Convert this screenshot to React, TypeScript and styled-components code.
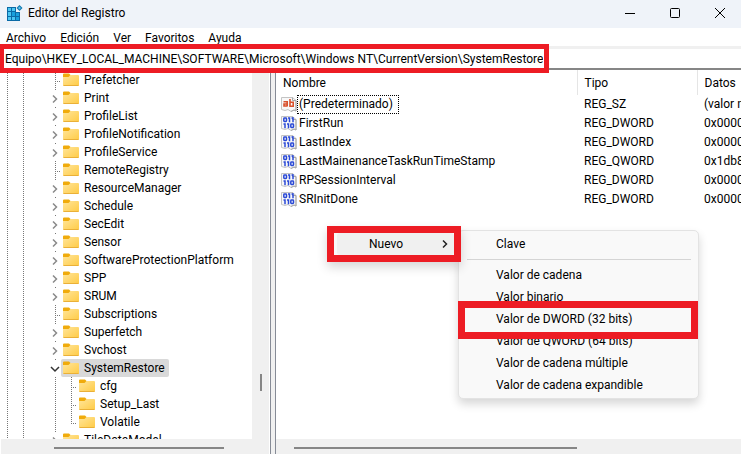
import React from "react";
import styled, { createGlobalStyle } from "styled-components";

const Global = createGlobalStyle`
  *, *::before, *::after { box-sizing: border-box; }
  body { margin: 0; background: #fff; overflow: hidden; }
  body, button, input { font-family: Roboto, "Open Sans", sans-serif; font-size: 12px; color: #000; }
  button { border: 0; padding: 0; background: none; }
`;

const MARK = "#ed1c24";
const dots = (dir: string) =>
  `repeating-linear-gradient(${dir}, #777 0 1px, transparent 1px 2px)`;

const Window = styled.div`
  position: relative;
  display: flex;
  flex-direction: column;
  height: 100vh;
  overflow: hidden;
  line-height: 18px;
`;
const TitleBar = styled.header`
  display: flex;
  align-items: center;
  gap: 3px;
  height: 28px;
  flex: none;
  padding: 0 0 2px 7px;
  background: #eff3f9;
`;
const Title = styled.h1`
  flex: 1;
  margin: 0 0 0 2px;
  font-size: 12px;
  font-weight: 400;
  line-height: 24px;
`;
const WindowButton = styled.button`
  display: grid;
  place-items: center;
  width: 42px;
  height: 22px;
`;
const MenuBar = styled.nav`
  display: flex;
  height: 18px;
  flex: none;
  padding-left: 6px;
  gap: 14px;
`;
const MenuButton = styled.button`
  line-height: 20px;
`;
const AddressBar = styled.div`
  display: flex;
  flex: none;
  height: 24px;
  border-top: 3px solid #f0f0f0;
  border-bottom: 2px solid #868686;
  padding-left: 4px;
`;
const Address = styled.input`
  position: relative;
  z-index: 2;
  width: 540px;
  height: 19px;
  border: 0;
  padding: 0 1px;
  background: #fff;
  outline: 5px solid ${MARK};
`;
const Panes = styled.main`
  display: flex;
  flex: 1;
  min-height: 0;
`;
const TreePane = styled.section`
  display: grid;
  grid-template: minmax(0, 1fr) 15px / minmax(0, 1fr) 17px;
  width: 269px;
  flex: none;
  padding-left: 1px;
`;
const Tree = styled.ul`
  margin: 0;
  padding: 1px 0 0;
  list-style: none;
  overflow: hidden;
`;
const TreeRow = styled.li`
  display: flex;
  height: 18px;
`;
const Guide = styled.span<{ $w: number }>`
  width: ${(p) => p.$w}px;
  flex: none;
  background: ${dots("180deg")} 6px 0 / 1px 100% no-repeat;
`;
const Leaf = styled.span<{ $last?: boolean }>`
  width: 12px;
  flex: none;
  background:
    ${dots("180deg")} 6px 0 / 1px ${(p) => (p.$last ? "11px" : "100%")} no-repeat,
    ${dots("90deg")} 6px 10px / 6px 1px no-repeat;
`;
const Toggle = styled.button`
  display: grid;
  place-items: center;
  width: 12px;
  height: 18px;
  padding-top: 2px;
  flex: none;
  background: ${dots("180deg")} 6px 0 / 1px 2px no-repeat;
`;
const Key = styled.button<{ $on?: boolean }>`
  display: flex;
  align-items: center;
  gap: 5px;
  height: 18px;
  padding: 0 4px 0 2px;
  border-radius: 2px;
  line-height: 18px;
  background: ${(p) => (p.$on ? "#d9d9d9" : "none")};
`;
const VScroll = styled.div`
  display: flex;
  justify-content: center;
  align-items: flex-end;
  padding-bottom: 48px;
  background: #f0f0f0;
`;
const VThumb = styled.span`
  width: 2px;
  height: 17px;
  background: #868686;
`;
const HScroll = styled.div<{ $pad: number }>`
  display: flex;
  align-items: center;
  grid-column: 1 / -1;
  height: 15px;
  flex: none;
  padding: 2px 0 0 ${(p) => p.$pad}px;
  background: #f0f0f0;
`;
const HThumb = styled.span<{ $w: number }>`
  width: ${(p) => p.$w}px;
  height: 2px;
  background: #868686;
`;
const Splitter = styled.div`
  width: 6px;
  flex: none;
  margin-left: 1px;
  border: solid #868b96;
  border-width: 0 1px;
  background: #f0f0f0;
`;
const ListPane = styled.section`
  display: flex;
  flex-direction: column;
  flex: 1;
  min-width: 0;
`;
const TableArea = styled.div`
  flex: 1;
  min-height: 0;
  overflow: hidden;
`;
const Table = styled.table`
  width: 100%;
  table-layout: fixed;
  border-collapse: collapse;
  th, td { padding: 0 0 0 7px; height: 19px; line-height: 19px; text-align: left; font-weight: 400; white-space: nowrap; overflow: hidden; }
  th { height: 24px; line-height: 24px; border-right: 1px solid #e5e5e5; border-top: 1px solid #fff; }
  th:last-child { border-right: 0; }
  td:first-child { padding-left: 5px; }
`;
const ValueName = styled.div<{ $focus?: boolean }>`
  display: flex;
  align-items: center;
  height: 19px;
  span { height: 19px; line-height: 17px; padding: 0 5px 0 1px; border: 1px ${(p) => (p.$focus ? "dotted #000" : "solid transparent")}; }
`;
const Popup = styled.div`
  position: absolute;
  background: #f9f9f9;
  box-shadow: 0 5px 10px rgba(0, 0, 0, 0.16);
`;
const ParentMenu = styled(Popup)`
  left: 327px;
  top: 226px;
  z-index: 2;
  width: 134px;
  height: 36px;
  padding: 0 0 0 3px;
  border: 7px solid ${MARK};
`;
const ParentItem = styled.button`
  display: flex;
  align-items: center;
  justify-content: space-between;
  width: 100%;
  height: 22px;
  padding: 0 4px 0 32px;
  border-radius: 3px;
  background: #f0f0f0;
`;
const SubMenu = styled(Popup)`
  left: 458px;
  top: 230px;
  width: 241px;
  padding: 2px 0;
  border: 1px solid #e3e3e3;
  border-radius: 5px;
`;
const MenuItem = styled.button<{ $marked?: boolean }>`
  display: block;
  position: relative;
  width: 100%;
  height: 22px;
  padding-left: 37px;
  text-align: left;
  line-height: 22px;
  &::after {
    content: "";
    display: ${(p) => (p.$marked ? "block" : "none")};
    position: absolute;
    z-index: 1;
    inset: -7px 0 -9px -1px;
    border: 7px solid ${MARK};
  }
`;
const Rule = styled.hr`
  margin: 4px 7px 4px 8px;
  border: 0;
  border-top: 1px solid #d5d5d5;
`;

const RegistryIcon = () => (
  <svg width="16" height="16" viewBox="0 0 16 16">
    <path d="M0 2h9v5h4v9H0z" fill="#0b6aa6" />
    <path d="M1 3h3v3H1zM5 3h3v3H5zM1 7h3v4H1zM1 12h3v3H1zM5 12h3v3H5z" fill="#4cc6f2" />
    <path d="M5 7h3v4H5zM9 8h3v3H9zM9 12h3v3H9z" fill="#18a0dc" />
    <path d="M12.500 0l3 3-3 3-3-3z" fill="#0f76ae" />
    <path d="M12.500 1.500L14 3l-1.500 1.500L11 3z" fill="#5cc4ec" />
  </svg>
);
const Folder = () => (
  <svg width="16" height="14" viewBox="0 0 16 14">
    <defs>
      <linearGradient id="folder" x1="0" y1="0" x2="1" y2="1">
        <stop offset="0" stopColor="#ffe59a" />
        <stop offset="1" stopColor="#ffcb45" />
      </linearGradient>
    </defs>
    <path d="M0 1.500Q0 .5 1 .5h5L8 2.500 6.500 5H0z" fill="#f0ab0c" />
    <path d="M0 4h5.500l2-2H15q1 0 1 1v9q0 1-1 1H1q-1 0-1-1z" fill="url(#folder)" />
    <path d="M.5 12.500h15" stroke="#eab038" />
  </svg>
);
const Chevron = ({ open, color }: { open?: boolean; color: string }) => (
  <svg width="10" height="10" viewBox="0 0 10 10" fill="none" stroke={color} strokeWidth="1.500">
    <path d={open ? "M1 3l4 4 4-4" : "M3 1.500l3.500 3.500L3 8.500"} />
  </svg>
);
const ValueIcon = ({ text }: { text?: boolean }) => (
  <svg width="16" height="17" viewBox="0 0 16 17" fill="none">
    <path d="M.5 1.500h11l3.500 3v10.500l-2-1-3 1.500-3-2-3 1-3.500-1z" fill="#f8f8f8" stroke="#c4c4c4" />
    <path d="M11.500 1.500v3H15v10.500l-2-1-3 1.500" stroke="#a8a8a8" />
    {text ? (
      <g stroke="#d8502c" strokeWidth="1.600">
        <path d="M2.500 5.800h3.700v4.800M6.200 8H3v2h3M9 3v7.200h3.200V6.200H9" />
      </g>
    ) : (
      <g stroke="#2b4ad6" strokeWidth="1.500">
        <rect x="2.800" y="3" width="2.700" height="3.500" rx=".7" />
        <path d="M7 3h1.500v4.200M10.500 3H12v4.200" />
        <path d="M2.500 9H4v4.200M6 9h1.500v4.200" />
        <rect x="9.800" y="9" width="2.700" height="3.500" rx=".7" />
      </g>
    )}
  </svg>
);

type Node = { name: string; leaf?: boolean; on?: boolean; child?: boolean; last?: boolean };
const nodes: Node[] = [
  { name: "Prefetcher", leaf: true },
  { name: "Print" },
  { name: "ProfileList" },
  { name: "ProfileNotification" },
  { name: "ProfileService" },
  { name: "RemoteRegistry", leaf: true },
  { name: "ResourceManager" },
  { name: "Schedule" },
  { name: "SecEdit" },
  { name: "Sensor" },
  { name: "SoftwareProtectionPlatform" },
  { name: "SPP" },
  { name: "SRUM" },
  { name: "Subscriptions", leaf: true },
  { name: "Superfetch" },
  { name: "Svchost" },
  { name: "SystemRestore", on: true },
  { name: "cfg", child: true },
  { name: "Setup_Last", child: true },
  { name: "Volatile", child: true, last: true },
  { name: "TileDataModel" },
];
const values = [
  ["(Predeterminado)", "REG_SZ", "(valor n"],
  ["FirstRun", "REG_DWORD", "0x00000"],
  ["LastIndex", "REG_DWORD", "0x00000"],
  ["LastMainenanceTaskRunTimeStamp", "REG_QWORD", "0x1db8"],
  ["RPSessionInterval", "REG_DWORD", "0x00000"],
  ["SRInitDone", "REG_DWORD", "0x00000"],
];
const kinds = [
  "Valor de cadena",
  "Valor binario",
  "Valor de DWORD (32 bits)",
  "Valor de QWORD (64 bits)",
  "Valor de cadena múltiple",
  "Valor de cadena expandible",
];

export default function App() {
  return (
    <Window>
      <Global />
      <TitleBar>
        <RegistryIcon />
        <Title>Editor del Registro</Title>
        <WindowButton aria-label="Minimizar">
          <svg width="10" height="10" stroke="#000"><path d="M0 5.500h10" /></svg>
        </WindowButton>
        <WindowButton aria-label="Maximizar">
          <svg width="10" height="10" stroke="#000" fill="none"><rect x=".5" y=".5" width="9" height="9" rx="1" /></svg>
        </WindowButton>
        <WindowButton aria-label="Cerrar">
          <svg width="10" height="10" stroke="#000"><path d="M0 0l10 10M10 0L0 10" /></svg>
        </WindowButton>
      </TitleBar>
      <MenuBar>
        {["Archivo", "Edición", "Ver", "Favoritos", "Ayuda"].map((m) => (
          <MenuButton key={m}>{m}</MenuButton>
        ))}
      </MenuBar>
      <AddressBar>
        <Address
          aria-label="Dirección"
          defaultValue="Equipo\HKEY_LOCAL_MACHINE\SOFTWARE\Microsoft\Windows NT\CurrentVersion\SystemRestore"
        />
      </AddressBar>
      <Panes>
        <TreePane>
          <Tree>
            {nodes.map((n) => (
              <TreeRow key={n.name}>
                <Guide $w={16} />
                <Guide $w={32} />
                {n.child ? (
                  <>
                    <Guide $w={16} />
                    <Leaf $last={n.last} />
                  </>
                ) : n.leaf ? (
                  <Leaf />
                ) : (
                  <Toggle aria-label={n.name}>
                    <Chevron open={n.on} color={n.on ? "#333" : "#8a8a8a"} />
                  </Toggle>
                )}
                <Key $on={n.on}>
                  <Folder />
                  {n.name}
                </Key>
              </TreeRow>
            ))}
          </Tree>
          <VScroll><VThumb /></VScroll>
          <HScroll $pad={53}><HThumb $w={170} /></HScroll>
        </TreePane>
        <Splitter />
        <ListPane>
          <TableArea>
            <Table>
              <colgroup>
                <col width="301" />
                <col width="120" />
                <col />
              </colgroup>
              <thead>
                <tr><th>Nombre</th><th>Tipo</th><th>Datos</th></tr>
              </thead>
              <tbody>
                {values.map(([name, type, data], i) => (
                  <tr key={name}>
                    <td>
                      <ValueName $focus={i === 0}>
                        <ValueIcon text={i === 0} />
                        <span>{name}</span>
                      </ValueName>
                    </td>
                    <td>{type}</td>
                    <td>{data}</td>
                  </tr>
                ))}
              </tbody>
            </Table>
          </TableArea>
          <HScroll $pad={18}><HThumb $w={283} /></HScroll>
        </ListPane>
      </Panes>
      <ParentMenu>
        <ParentItem>
          Nuevo
          <Chevron color="#222" />
        </ParentItem>
      </ParentMenu>
      <SubMenu>
        <MenuItem>Clave</MenuItem>
        <Rule />
        {kinds.map((k, i) => (
          <MenuItem key={k} $marked={i === 2}>{k}</MenuItem>
        ))}
      </SubMenu>
    </Window>
  );
}
